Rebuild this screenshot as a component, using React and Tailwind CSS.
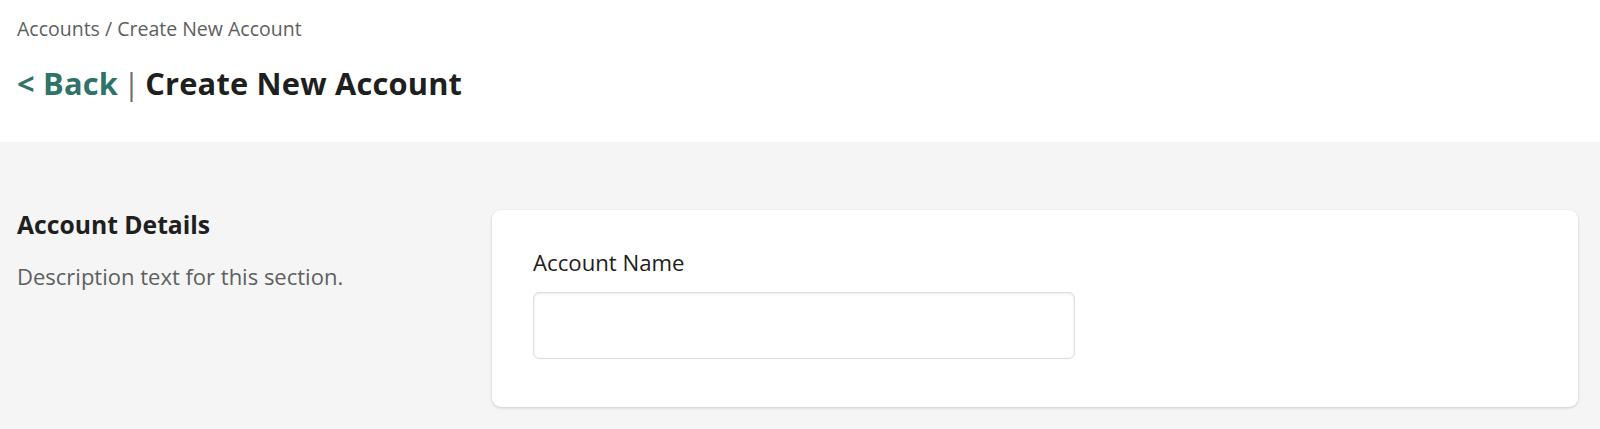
export default function App() {
  return (
    <div className="min-h-[429px] w-full bg-[#f4f5f4] font-['Open_Sans',sans-serif]">
      <header className="h-[142px] bg-white pl-[17px] pt-[16px]">
        <div className="text-[19.5px] leading-[26px] text-[#5c6160]">Accounts / Create New Account</div>
        <h1 className="mt-[23px] flex items-baseline text-[30.8px] font-bold leading-[36px] tracking-[0.2px]">
          <a href="#" className="text-[#2f7369]">&lt; Back</a>
          <span className="mx-[5px] font-normal text-[#6e7372]">|</span>
          <span className="text-[#1e2020]">Create New Account</span>
        </h1>
      </header>
      <main className="flex pl-[17px] pr-[22px] pt-[68px]">
        <section className="w-[475px] shrink-0">
          <h2 className="text-[24.7px] font-bold leading-[30px] text-[#1e2020]">Account Details</h2>
          <p className="mt-[22px] text-[22px] leading-[28px] text-[#5c6160]">Description text for this section.</p>
        </section>
        <div className="flex-1 rounded-[9px] bg-white pb-[48px] pl-[41px] pt-[39px] shadow-[0_1px_3px_rgba(0,0,0,0.18)]">
          <label className="block text-[22.2px] leading-[28px] text-[#1e2020]">Account Name</label>
          <input
            type="text"
            className="mt-[15px] block h-[67px] w-[542px] rounded-[6px] border border-[#dcdddd] bg-white shadow-[inset_0_1px_3px_rgba(0,0,0,0.08)] outline-none"
          />
        </div>
      </main>
    </div>
  );
}
